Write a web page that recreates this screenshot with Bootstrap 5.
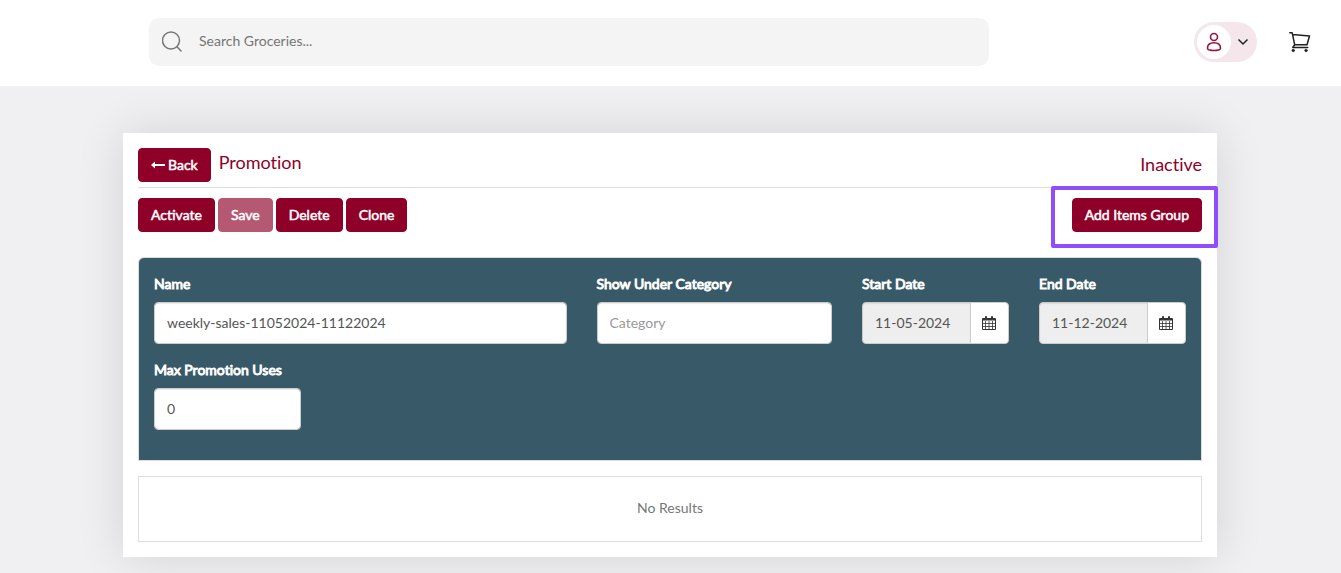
<!DOCTYPE html>
<html lang="en">
<head>
<meta charset="utf-8">
<meta name="viewport" content="width=device-width, initial-scale=1">
<title>Promotion</title>
<link href="https://cdn.jsdelivr.net/npm/bootstrap@5.3.0/dist/css/bootstrap.min.css" rel="stylesheet">
<style>
  body { background: #f0f0f2; color: #666; font-family: Lato, "Open Sans", sans-serif; font-size: 14px; line-height: 20px; font-variant-ligatures: none; }
  .topbar { padding: 18px 30px 20px 149px; gap: 32px; }
  .search-box { background: #f4f4f4; border-radius: 10px; height: 48px; max-width: 840px; padding: 0 13px; gap: 15px; }
  .search-box input { font-size: 14px; color: #666; padding: 0 0 3px; }
  .search-box input::placeholder { color: #757575; opacity: 1; }
  .account { background: #f4e6ea; height: 40px; padding: 0 8px 0 3px; gap: 6px; }
  .account-face { width: 34px; height: 34px; }
  .page { max-width: 1125px; padding: 47px 16px 16px 15px; }
  .sheet { padding: 15px; box-shadow: 0 0 45px rgba(0, 0, 0, .12); }
  .sheet-head { border-bottom: 1px solid #ddd; padding-bottom: 5px; }
  .sheet-head h1, .status { color: #8f0028; font-size: 18px; line-height: 28px; font-weight: 400; padding-bottom: 2px; }
  .btn-wine { --bs-btn-color: #fff; --bs-btn-bg: #8f0028; --bs-btn-border-color: #8f0028; --bs-btn-hover-color: #fff; --bs-btn-hover-bg: #74001f; --bs-btn-hover-border-color: #74001f; --bs-btn-active-color: #fff; --bs-btn-active-bg: #74001f; --bs-btn-disabled-color: #fff; --bs-btn-disabled-bg: #8f0028; --bs-btn-disabled-border-color: #8f0028; --bs-btn-padding-x: 12px; --bs-btn-padding-y: 6px; --bs-btn-font-size: 14px; --bs-btn-line-height: 20px; --bs-btn-font-weight: 400; --bs-btn-border-radius: 4px; -webkit-text-stroke: .5px #fff; }
  .actions { padding: 10px 0 25px; }
  .tools { gap: 3px; }
  .spotlight { inset: -12px -16px -16px -21px; border: 4px solid #8f4dfc; border-radius: 2px; pointer-events: none; }
  .filters { background: #385968; border: 1px solid #ddd; border-radius: 6px 6px 0 0; padding: 16px 15px 30px; margin-bottom: 15px; }
  .filters .row { --bs-gutter-x: 30px; }
  .filters label { color: #fff; font-weight: 400; font-size: 14px; margin-bottom: 8px; -webkit-text-stroke: .9px #fff; }
  .filters .form-control { height: 42px; border: 1px solid #ccc; border-radius: 4px; padding: 0 12px 2px; font-size: 14px; color: #555; box-shadow: inset 0 1px 1px rgba(0, 0, 0, .08); }
  .filters .form-control::placeholder { color: #999; opacity: 1; }
  .filters .form-control[readonly] { background: #eee; }
  .date-btn { width: 39px; background: #fff; border: 1px solid #ccc; border-radius: 4px; color: #333; padding: 0 2px 0 0; }
  .date-btn:hover { background: #eee; }
  .results { border: 1px solid #ddd; padding: 21px 22px 23px; color: #777; }
</style>
</head>
<body>
<header class="topbar bg-white d-flex align-items-center">
  <form class="search-box d-flex align-items-center flex-grow-1" role="search">
    <svg class="flex-shrink-0" width="22" height="22" viewBox="0 0 22 22" fill="none" stroke="#777" stroke-width="1.5" stroke-linecap="round" aria-hidden="true"><circle cx="9" cy="9.500" r="8.500"/><path d="M15 15.700l4 4.300"/></svg>
    <input class="form-control border-0 bg-transparent shadow-none" type="text" placeholder="Search Groceries..." aria-label="Search groceries">
  </form>
  <button type="button" class="account btn rounded-pill border-0 d-flex align-items-center ms-auto" aria-label="Account">
    <span class="account-face bg-white rounded-circle d-flex align-items-center justify-content-center">
      <svg width="16" height="20" viewBox="0 0 16 20" fill="none" stroke="#9b1238" stroke-width="1.6"><circle cx="8" cy="5" r="3.500"/><path d="M1.500 16.200C1.500 12.800 4 10.800 8 10.800s6.500 2 6.500 5.400c0 .8-.4 1.200-1.200 1.500-3.200 1-7.400 1-10.600 0-.8-.3-1.200-.7-1.200-1.500z"/></svg>
    </span>
    <svg width="12" height="8" viewBox="0 0 12 8" fill="none" stroke="#222" stroke-width="1.5"><path d="M1.500 1.500L6 6l4.500-4.500"/></svg>
  </button>
  <a href="#" class="d-flex" aria-label="Cart">
    <svg width="22" height="22" viewBox="0 0 22 22" fill="none" stroke="#222" stroke-width="1.500" stroke-linejoin="round" stroke-linecap="round"><path d="M.8 1.800h2.400l2.500 12h12.300l2.500-8.800L3.600 3.600M5.700 13.800l-2 2.700h15"/><circle cx="4.200" cy="19.500" r="1.300" fill="#222" stroke-width=".6"/><circle cx="17" cy="19.500" r="1.300" fill="#222" stroke-width=".6"/></svg>
  </a>
</header>

<main class="page container-fluid">
  <section class="sheet bg-white">
    <div class="sheet-head d-flex align-items-center">
      <button type="button" class="btn btn-wine d-flex align-items-center">
        <svg width="17" height="8" viewBox="0 0 17 8" fill="#fff" stroke="none" aria-hidden="true"><path d="M0 4l4-3.500v2.500h10v2H4v2.500z"/></svg>Back
      </button>
      <h1 class="mb-1 ms-2">Promotion</h1>
      <span class="status ms-auto">Inactive</span>
    </div>

    <div class="actions d-flex justify-content-between">
      <div class="tools d-flex flex-wrap">
        <button type="button" class="btn btn-wine">Activate</button>
        <button type="button" class="btn btn-wine" disabled>Save</button>
        <button type="button" class="btn btn-wine">Delete</button>
        <button type="button" class="btn btn-wine">Clone</button>
      </div>
      <div class="position-relative">
        <button type="button" class="btn btn-wine">Add Items Group</button>
        <span class="spotlight position-absolute"></span>
      </div>
    </div>

    <form class="filters">
      <div class="row gy-3">
        <div class="col-12 col-md-5">
          <label class="d-block" for="promo-name">Name</label>
          <input class="form-control" id="promo-name" type="text" value="weekly-sales-11052024-11122024">
        </div>
        <div class="col-12 col-md-3">
          <label class="d-block" for="promo-category">Show Under Category</label>
          <input class="form-control" id="promo-category" type="text" placeholder="Category">
        </div>
        <div class="col-6 col-md-2">
          <label class="d-block" for="promo-start">Start Date</label>
          <div class="input-group flex-nowrap">
            <input class="form-control" id="promo-start" type="text" value="11-05-2024" readonly>
            <button class="date-btn btn d-flex align-items-center justify-content-center" type="button" aria-label="Choose start date">
              <svg width="14" height="14" viewBox="0 0 14 14" fill="none" stroke="#333"><path d="M.5 2.500h13v11H.5z"/><path d="M1 3.500h12" stroke-width="2"/><path d="M.5 7.500h13M.5 10.500h13M3.500 5v8.500M7 5v8.500M10.500 5v8.500" stroke-width=".8"/><path d="M3.500.5h1v3h-1zM9.500.5h1v3h-1z" fill="#fff"/></svg>
            </button>
          </div>
        </div>
        <div class="col-6 col-md-2">
          <label class="d-block" for="promo-end">End Date</label>
          <div class="input-group flex-nowrap">
            <input class="form-control" id="promo-end" type="text" value="11-12-2024" readonly>
            <button class="date-btn btn d-flex align-items-center justify-content-center" type="button" aria-label="Choose end date">
              <svg width="14" height="14" viewBox="0 0 14 14" fill="none" stroke="#333"><path d="M.5 2.500h13v11H.5z"/><path d="M1 3.500h12" stroke-width="2"/><path d="M.5 7.500h13M.5 10.500h13M3.500 5v8.500M7 5v8.500M10.500 5v8.500" stroke-width=".8"/><path d="M3.500.5h1v3h-1zM9.500.5h1v3h-1z" fill="#fff"/></svg>
            </button>
          </div>
        </div>
        <div class="col-6 col-md-2">
          <label class="d-block text-nowrap" for="promo-max">Max Promotion Uses</label>
          <input class="form-control" id="promo-max" type="text" value="0">
        </div>
      </div>
    </form>

    <div class="results text-center">No Results</div>
  </section>
</main>
<script src="https://cdn.jsdelivr.net/npm/bootstrap@5.3.0/dist/js/bootstrap.bundle.min.js"></script>
</body>
</html>
